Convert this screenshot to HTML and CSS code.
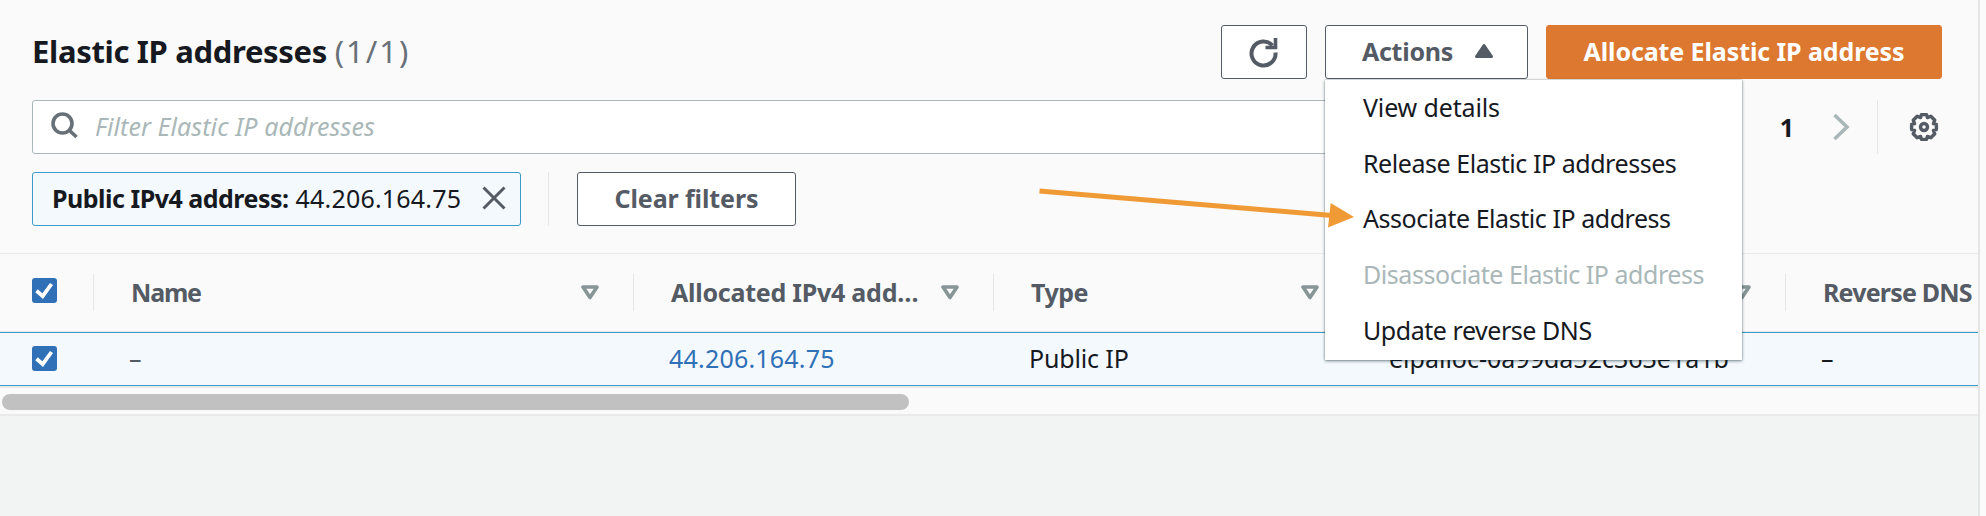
FILE: index.html
```html
<!DOCTYPE html>
<html lang="en">
<head>
<meta charset="utf-8">
<title>Elastic IP addresses</title>
<link rel="stylesheet" href="styles.css">
</head>
<body>
<main class="page">
  <section class="panel">
    <header class="title-bar">
      <h1 class="title">Elastic IP addresses <span class="count">(1/1)</span></h1>
      <div class="actions">
        <button class="btn btn-icon" aria-label="Refresh">
          <svg width="32" height="32" viewBox="0 0 32 32" fill="none" stroke="#545b64" stroke-width="4"><path d="M25.5 9.5A12 12 0 1 0 28.5 16.500"/><path d="M28.500 2v9.500H18.500" stroke-width="3.600"/></svg>
        </button>
        <div class="dropdown">
          <button class="btn btn-actions"><span class="t-actions">Actions</span>
            <svg width="20" height="16" viewBox="0 0 20 16"><path d="M10 2.500L17.500 13.500H2.500z" fill="#545b64" stroke="#545b64" stroke-width="3" stroke-linejoin="round"/></svg>
          </button>
          <ul class="menu">
            <li class="view">View details</li>
            <li>Release Elastic IP addresses</li>
            <li>Associate Elastic IP address</li>
            <li class="disabled">Disassociate Elastic IP address</li>
            <li>Update reverse DNS</li>
          </ul>
        </div>
        <button class="btn btn-primary">Allocate Elastic IP address</button>
      </div>
    </header>

    <div class="search-bar">
      <div class="search">
        <svg width="28" height="28" viewBox="0 0 28 28" fill="none" stroke="#687078" stroke-width="3.600"><circle cx="11.500" cy="11.500" r="9.500"/><path d="M18 18l7.500 7"/></svg>
        <span class="placeholder">Filter Elastic IP addresses</span>
      </div>
      <div class="pager">
        <span class="page-number">1</span>
        <svg class="next" width="18" height="28" viewBox="0 0 18 28" fill="none" stroke="#aab7b8" stroke-width="3.600"><path d="M1.500 2l12.500 12L1.500 26"/></svg>
        <span class="rule"></span>
        <svg class="gear" width="30" height="30" viewBox="-15 -15 30 30" fill="none" stroke="#545b64" stroke-width="3.400" stroke-linejoin="round"><path d="M-2.600 -12.400H2.600L3.400 -9.400L6.800 -10.800L10.800 -6.800L9.400 -3.400L12.400 -2.600V2.600L9.400 3.400L10.800 6.800L6.800 10.800L3.400 9.400L2.600 12.400H-2.600L-3.400 9.400L-6.800 10.800L-10.800 6.800L-9.400 3.400L-12.400 2.600V-2.600L-9.400 -3.400L-10.800 -6.800L-6.800 -10.800L-3.400 -9.400Z"/><circle r="3.500"/></svg>
      </div>
    </div>

    <div class="filters">
      <div class="chip">
        <b>Public IPv4 address:</b><span class="chip-value">44.206.164.75</span>
        <svg width="24" height="24" viewBox="0 0 24 24" fill="none" stroke="#545b64" stroke-width="3"><path d="M1.500 1.500l21 21M22.500 1.500l-21 21"/></svg>
      </div>
      <span class="rule"></span>
      <button class="btn btn-clear">Clear filters</button>
    </div>

    <div class="table">
      <div class="row head">
        <div class="cell check"><svg width="25" height="25" viewBox="0 0 25 25"><rect width="25" height="25" rx="3" fill="#2f70b7"/><path d="M4.500 12.800l6.200 5.400L19.500 6" fill="none" stroke="#fff" stroke-width="3.800"/></svg></div>
        <div class="cell"><span class="h-name">Name</span><svg class="sort" width="18" height="15" viewBox="0 0 18 15"><path d="M2 2H16L9 12.500z" fill="none" stroke="#879596" stroke-width="3.600" stroke-linejoin="round"/></svg></div>
        <div class="cell"><span class="h-ip">Allocated IPv4 add…</span><svg class="sort" width="18" height="15" viewBox="0 0 18 15"><path d="M2 2H16L9 12.500z" fill="none" stroke="#879596" stroke-width="3.600" stroke-linejoin="round"/></svg></div>
        <div class="cell"><span class="h-type">Type</span><svg class="sort" width="18" height="15" viewBox="0 0 18 15"><path d="M2 2H16L9 12.500z" fill="none" stroke="#879596" stroke-width="3.600" stroke-linejoin="round"/></svg></div>
        <div class="cell"><svg class="sort" width="18" height="15" viewBox="0 0 18 15"><path d="M2 2H16L9 12.500z" fill="none" stroke="#879596" stroke-width="3.600" stroke-linejoin="round"/></svg></div>
        <div class="cell"><span class="h-dns">Reverse DNS</span></div>
      </div>
      <div class="row selected">
        <div class="cell check"><svg width="25" height="25" viewBox="0 0 25 25"><rect width="25" height="25" rx="3" fill="#2f70b7"/><path d="M4.500 12.800l6.200 5.400L19.500 6" fill="none" stroke="#fff" stroke-width="3.800"/></svg></div>
        <div class="cell muted">–</div>
        <div class="cell"><a class="link">44.206.164.75</a></div>
        <div class="cell public">Public IP</div>
        <div class="cell">eipalloc-0a99da52c363e1a1b</div>
        <div class="cell">–</div>
      </div>
    </div>
    <div class="scroll-track"><div class="scroll-thumb"></div></div>
  </section>
</main>
<svg class="pointer" width="320" height="44" viewBox="0 0 320 44"><path d="M1.500 6L294 30.500" stroke="#f09a36" stroke-width="5"/><path d="M292.700 18L316 32L290 42.500z" fill="#f09a36"/></svg>
</body>
</html>
```
FILE: styles.css
```css
* { box-sizing: border-box; }
body {
  margin: 0;
  height: 516px;
  overflow: hidden;
  background: #fafafa;
  color: #16191f;
  font: 400 25px/34px "Noto Sans", "Open Sans", sans-serif;
}
.page {
  width: 1980px;
  height: 516px;
  border-right: 2px solid #e4e5e5;
  background: #f2f3f3;
}
.panel {
  height: 416px;
  background: #fafafa;
  border-bottom: 2px solid #eaeaea;
}
.title-bar {
  display: flex;
  justify-content: space-between;
  height: 100px;
  padding: 25px 36px 0 32px;
}
.title {
  margin: 5px 0 0;
  font-size: 31px;
  line-height: 42px;
  letter-spacing: -0.33px;
}
.count {
  color: #687078;
  font-weight: 400;
  letter-spacing: 2px;
}
.actions { display: flex; gap: 18px; }
.btn {
  display: flex;
  align-items: center;
  justify-content: center;
  height: 54px;
  padding: 0 0 2px;
  border: 1px solid #545b64;
  border-radius: 3px;
  background: #fff;
  color: #545b64;
  font: 700 25px/34px "Noto Sans", "Open Sans", sans-serif;
  letter-spacing: -0.1px;
}
.btn-icon { width: 86px; }
.btn-icon svg { margin: 1px 0 0 -3px; }
.dropdown { position: relative; }
.btn-actions { width: 203px; gap: 21px; padding-left: 3px; }
.t-actions { letter-spacing: -0.25px; }
.btn-primary {
  width: 396px;
  border-color: #dd7830;
  background: #dd7830;
  color: #fff;
}
.menu {
  position: absolute;
  z-index: 2;
  top: 55px;
  left: 0;
  width: 417px;
  height: 280px;
  margin: 0;
  padding: 0 0 1px;
  list-style: none;
  background: #fff;
  box-shadow: 0 1px 3px rgba(0, 28, 36, 0.5), 0 0 1px rgba(0, 28, 36, 0.4);
}
.menu li {
  height: 55.7px;
  padding-left: 38px;
  line-height: 55.7px;
  letter-spacing: -0.45px;
  white-space: nowrap;
}
.menu .view { letter-spacing: -0.15px; }
.menu .disabled { color: #aab7b8; }
.search-bar {
  display: flex;
  height: 54px;
  padding: 0 36px 0 32px;
}
.search {
  display: flex;
  align-items: center;
  gap: 16px;
  width: 1640px;
  padding: 0 0 2px 18px;
  border: 1px solid #aab7b8;
  border-radius: 3px;
  background: #fff;
}
.placeholder {
  color: #aab7b8;
  font-style: italic;
  letter-spacing: 0.08px;
}
.pager {
  display: flex;
  flex: 1;
  align-items: center;
  justify-content: flex-end;
}
.page-number { margin: 0 39px 1px 0; font-weight: 700; }
.next { margin-right: 26px; }
.rule { width: 1px; height: 54px; background: #e6e8e8; }
.gear { margin: 0 3px 0 31px; }
.filters {
  display: flex;
  height: 100px;
  padding: 18px 0 0 32px;
  border-bottom: 1px solid #eaeaea;
}
.filters .rule { margin: 0 28px 0 27px; }
.chip {
  display: flex;
  align-items: center;
  width: 489px;
  height: 54px;
  padding: 0 0 2px 19px;
  border: 1px solid #3b9cc9;
  border-radius: 3px;
  background: #f3f9fd;
}
.chip b { letter-spacing: -0.5px; }
.chip-value { margin: 0 21px 0 7px; letter-spacing: 0.2px; }
.btn-clear { width: 219px; }
.row {
  display: grid;
  grid-template-columns: 94px 540px 360px 360px 432px 192px;
}
.head {
  height: 78px;
  padding: 20px 0;
  border-bottom: 1px solid #eaeaea;
  color: #545b64;
  font-weight: 700;
}
.cell {
  display: flex;
  align-items: center;
  padding-left: 35px;
  white-space: nowrap;
}
.head .cell {
  height: 37px;
  padding: 0 34px 1px 37px;
  border-right: 1px solid #e6e8e8;
}
.head .cell:last-child { padding-right: 0; border-right: 0; }
.sort { margin-left: auto; }
.row .check { padding: 0 0 0 32px; }
.head .check svg { margin-top: -4px; }
.h-name { letter-spacing: -1.2px; }
.h-ip { letter-spacing: -0.25px; }
.h-type { letter-spacing: -0.5px; }
.h-dns { letter-spacing: -0.8px; }
.selected {
  height: 54px;
  padding-bottom: 2px;
  border: solid #3b9cc9;
  border-width: 1px 0;
  background: #f3f9fd;
}
.muted { color: #545b64; }
.link { color: #2f70b7; letter-spacing: 0.2px; }
.public { letter-spacing: -0.15px; }
.scroll-track {
  padding: 6px 2px 0;
  border-top: 2px solid #e8e9e9;
}
.scroll-thumb {
  width: 907px;
  height: 16px;
  border-radius: 8px;
  background: #c1c1c1;
}
.pointer {
  position: absolute;
  z-index: 3;
  top: 185px;
  left: 1038px;
}
```
